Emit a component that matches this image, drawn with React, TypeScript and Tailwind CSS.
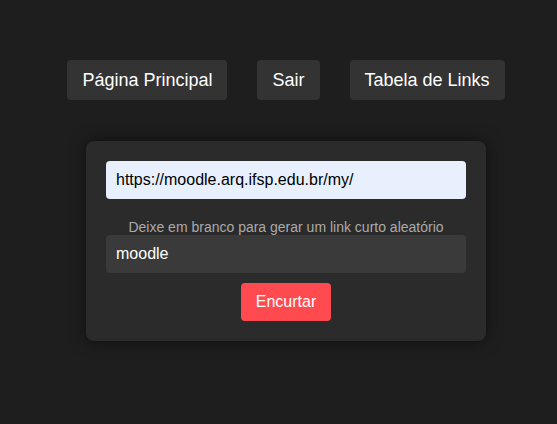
const navItems = ["Página Principal", "Sair", "Tabela de Links"];

const App = () => {
  return (
    <div
      className="min-h-[424px] w-full bg-[#1e1e1e] pl-[15px] pt-[60px] flex flex-col items-center"
      style={{ fontFamily: '"Liberation Sans", Arial, sans-serif' }}
    >
      <nav className="flex gap-[30px]">
        {navItems.map((item) => (
          <button
            key={item}
            className="h-[40px] px-[15px] rounded-[4px] bg-[#333333] text-white text-[18px]"
          >
            {item}
          </button>
        ))}
      </nav>

      <div className="mt-[41px] w-[400px] rounded-[8px] bg-[#2b2b2b] p-[20px] shadow-[0_0_16px_rgba(0,0,0,0.55)] flex flex-col items-center">
        <input
          className="w-full h-[38px] rounded-[4px] bg-[#e8f0fe] px-[10px] text-[16px] text-black outline-none"
          defaultValue="https://moodle.arq.ifsp.edu.br/my/"
        />
        <p className="mt-[20px] h-[16px] leading-[16px] text-[14px] text-[#aaaaaa]">
          Deixe em branco para gerar um link curto aleatório
        </p>
        <input
          className="w-full h-[38px] rounded-[4px] bg-[#3a3a3a] px-[10px] text-[16px] text-white outline-none"
          defaultValue="moodle"
        />
        <button className="mt-[10px] h-[38px] w-[90px] rounded-[4px] bg-[#ff4b4f] text-white text-[16px]">
          Encurtar
        </button>
      </div>
    </div>
  );
};

export default App;
